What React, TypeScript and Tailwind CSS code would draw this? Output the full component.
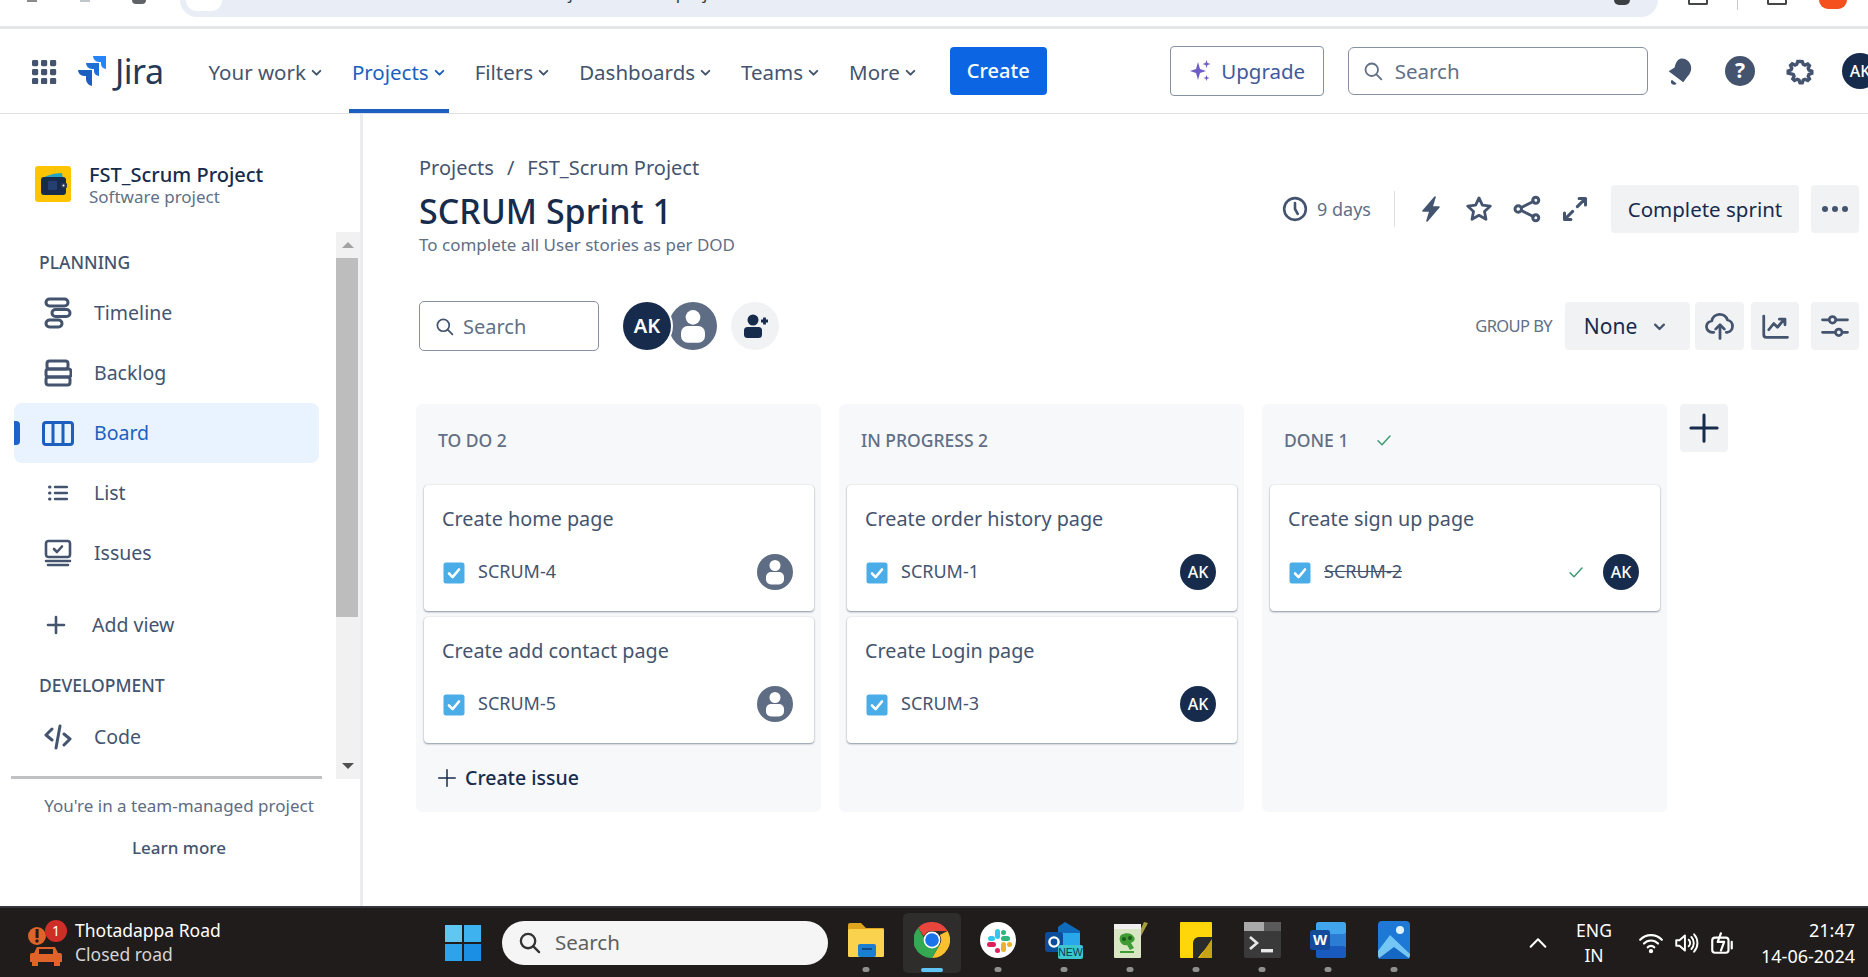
import React from "react";

const I = ({ s = 24, w = 2, c = "#44546f", className = "", children, vb = "0 0 24 24" }: any) => (
  <svg width={s} height={s} viewBox={vb} fill="none" stroke={c} strokeWidth={w} strokeLinecap="round" strokeLinejoin="round" className={className}>
    {children}
  </svg>
);
const Chevron = ({ c = "#44546f", s = 13 }: any) => (
  <I s={s} w={3.6} c={c}><path d="M5 9l7 7 7-7" /></I>
);
const SearchI = ({ s = 20, c = "#44546f", w = 2.2 }: any) => (
  <I s={s} c={c} w={w}><circle cx="10.5" cy="10.5" r="7.5" /><path d="M16 16l6 6" /></I>
);
const Check = ({ s = 16, c = "#3d9a73", w = 2.2 }: any) => (
  <I s={s} c={c} w={w}><path d="M3 13l6 6L21 6" /></I>
);
const Person = ({ s = 36 }: any) => (
  <svg width={s} height={s} viewBox="0 0 36 36">
    <circle cx="18" cy="18" r="18" fill="#5e6c84" />
    <circle cx="18" cy="11.5" r="5.5" fill="#fff" />
    <rect x="9" y="18" width="18" height="12.5" rx="5" fill="#fff" />
  </svg>
);
const AK = () => (
  <div className="w-[36px] h-[36px] rounded-full bg-[#172b4d] text-white flex items-center justify-center text-[16px] font-medium shrink-0">AK</div>
);
const CheckBox = () => (
  <svg width="22" height="22" viewBox="0 0 22 22" className="shrink-0">
    <rect x="0.5" y="0.5" width="21" height="21" rx="2.5" fill="#4bade8" />
    <path d="M6 11.5l3.6 3.6L16 7.5" stroke="#fff" strokeWidth="2.6" fill="none" strokeLinecap="round" strokeLinejoin="round" />
  </svg>
);

const navItems = [
  { t: "Your work", ml: "ml-[45px]" },
  { t: "Projects", ml: "ml-[29px]", active: true },
  { t: "Filters", ml: "ml-[29px]" },
  { t: "Dashboards", ml: "ml-[29px]" },
  { t: "Teams", ml: "ml-[29px]" },
  { t: "More", ml: "ml-[29px]" },
];

const TopBar = () => (
  <div className="h-[29px] shrink-0 bg-white border-b-[3px] border-[#e3e5e6] flex items-start overflow-hidden">
    <div className="w-[180px] shrink-0 flex items-start">
      <div className="ml-[27px] w-[10px] h-[2px] bg-[#8a8d90]" />
      <div className="ml-[43px] w-[10px] h-[2px] bg-[#c4c7c9]" />
      <div className="ml-[42px] w-[14px] h-[4px] rounded-b-full bg-[#5f6368]" />
    </div>
    <div className="w-[1478px] h-[17px] bg-[#e9eef6] rounded-b-[17px] overflow-hidden flex items-start shrink-0">
      <div className="ml-[6px] w-[36px] h-[11px] bg-white rounded-b-full" />
      <div className="ml-[239px] -mt-[18px] text-[17px] leading-[22px] text-[#3c4043] whitespace-nowrap">
        atlassian.net/jira/software/projects/SCRUM/boards/1
      </div>
      <div className="ml-auto mr-[28px] w-[16px] h-[5px] bg-[#3c4043] rounded-b-[6px]" />
    </div>
    <div className="ml-[30px] w-[20px] h-[5px] border-2 border-t-0 border-[#444746] rounded-b-[2px]" />
    <div className="ml-[29px] w-[1px] h-[10px] bg-[#c4c7c9]" />
    <div className="ml-[29px] w-[20px] h-[5px] border-2 border-t-0 border-[#444746] rounded-b-[2px]" />
    <div className="ml-[32px] w-[28px] h-[9px] rounded-b-full bg-[#f4511e]" />
  </div>
);

const JiraNav = () => (
  <div className="h-[85px] shrink-0 bg-white border-b border-[#dfe1e4] flex items-center pl-[31px] whitespace-nowrap overflow-hidden">
    <svg width="26" height="25" viewBox="0 0 26 25" fill="#44546f" className="shrink-0">
      {[1, 10, 19].map((y) => [1, 10, 19].map((x) => <rect key={x + "-" + y} x={x} y={y} width="6.2" height="6.2" rx="1.4" />))}
    </svg>
    <svg width="31" height="32" viewBox="0 0 31 32" className="ml-[19px] shrink-0">
      <path d="M30 1H17a6 6 0 006 6h2v2a5 5 0 005 5z" fill="#2684ff" />
      <path d="M23 8H10a6 6 0 006 6h2v2a5 5 0 005 5z" fill="#1f6fd6" />
      <path d="M16 15H2a6 6 0 006 6h2v3c0 3 2 6 6 7z" fill="#1c5fc0" />
    </svg>
    <span className="ml-[8px] text-[34px] leading-none text-[#253858] tracking-[-0.5px] shrink-0">Jira</span>
    {navItems.map((n) => (
      <div key={n.t} className={`${n.ml} relative h-[84px] pt-[2px] flex items-center gap-[4px] shrink-0 ${n.active ? "text-[#1d5fbf]" : "text-[#44546f]"} text-[20.5px]`}>
        <span>{n.t}</span>
        <Chevron c={n.active ? "#1d5fbf" : "#44546f"} />
        {n.active && <div className="absolute left-[-3px] right-[-3px] bottom-0 h-[4px] bg-[#1d5fbf]" />}
      </div>
    ))}
    <button className="ml-[33px] w-[97px] h-[48px] rounded-[4px] bg-[#0c66e4] text-white text-[20px] font-medium flex items-center justify-center shrink-0">Create</button>
    <button className="ml-[123px] w-[154px] h-[50px] rounded-[4px] border border-[#8590a2] bg-white flex items-center justify-center gap-[9px] text-[20.5px] text-[#3f5a9a] shrink-0">
      <svg width="24" height="24" viewBox="0 0 24 24" fill="#6e5dc6">
        <path d="M10 3l2 7 6 2-6 2-2 7-2-7-6-2 6-2z" />
        <path d="M18.5 1l1 3 3 1-3 1-1 3-1-3-3-1 3-1zM18.5 16l.8 2.2 2.2.8-2.2.8-.8 2.2-.8-2.2-2.2-.8 2.2-.8z" />
      </svg>
      Upgrade
    </button>
    <div className="ml-[24px] w-[300px] h-[48px] rounded-[6px] border border-[#8590a2] flex items-center pl-[14px] gap-[12px] text-[20.5px] text-[#626f86] shrink-0">
      <SearchI s={20} c="#626f86" />
      <span>Search</span>
    </div>
    <svg width="34" height="34" viewBox="0 0 24 24" className="ml-[15px] shrink-0" fill="#44546f">
      <path d="M13.5 3.2c3.4.2 6.3 3 6.4 6.5.1 2.5-1 4.6-2.6 6.2l-3 4-10.3-7.8 4.2-2.6C8.7 7.2 10 3 13.5 3.2z" />
      <path d="M6.4 18.4l3.2 2.4c-1 1.3-2.5 1.2-3.4.4-.8-.7-.8-2-.1-2.8z" />
    </svg>
    <svg width="32" height="32" viewBox="0 0 32 32" className="ml-[27px] shrink-0">
      <circle cx="16" cy="16" r="15" fill="#44546f" />
      <text x="16" y="23" textAnchor="middle" fontSize="21" fontWeight="700" fill="#fff" fontFamily="Noto Sans">?</text>
    </svg>
    <svg width="30" height="30" viewBox="0 0 24 24" className="ml-[29px] shrink-0" fill="none" stroke="#44546f" strokeWidth="3">
      <path d="M12 3.5l2 .1.9 2.5 1.6.7 2.4-1.1 1.5 1.5-1.1 2.4.7 1.6 2.5.9v2l-2.5.9-.7 1.6 1.1 2.4-1.5 1.5-2.4-1.1-1.6.7-.9 2.5h-2l-.9-2.5-1.6-.7-2.4 1.1-1.5-1.5 1.1-2.4-.7-1.6L1.5 14v-2l2.5-.9.7-1.6L3.6 7.1l1.5-1.5 2.4 1.1 1.6-.7.9-2.5z" transform="translate(1.2 1.2) scale(.9)" />
    </svg>
    <div className="ml-[27px] w-[36px] h-[36px] rounded-full bg-[#172b4d] text-white text-[16px] font-medium flex items-center pl-[8px] shrink-0">AK</div>
  </div>
);

const RowIcons: Record<string, React.ReactNode> = {
  Timeline: (
    <svg width="28" height="32" viewBox="0 0 28 32" fill="none" stroke="#44546f" strokeWidth="3" className="-ml-[2px]">
      <rect x="2" y="2" width="22" height="7" rx="3.5" />
      <rect x="8" y="12.5" width="18" height="7" rx="3.5" />
      <rect x="2" y="23" width="16" height="7" rx="3.5" />
    </svg>
  ),
  Backlog: (
    <svg width="28" height="28" viewBox="0 0 28 28" fill="none" stroke="#44546f" strokeWidth="3" className="-ml-[2px]">
      <rect x="3" y="2" width="21" height="8" rx="2.5" />
      <rect x="2" y="10" width="25" height="8" rx="2.5" />
      <rect x="2" y="18" width="24" height="8" rx="2.5" />
    </svg>
  ),
  Board: (
    <svg width="32" height="25" viewBox="0 0 32 25" fill="none" stroke="#1d5fbf" strokeWidth="3" className="-ml-[2px] shrink-0">
      <rect x="1.5" y="1.5" width="29" height="22" rx="2.5" />
      <path d="M11 2v21M21 2v21" />
    </svg>
  ),
  List: (
    <svg width="20" height="18" viewBox="0 0 20 18" fill="none" stroke="#44546f" strokeWidth="2.4" strokeLinecap="round" className="-ml-[2px]">
      <path d="M7 3h12M7 9h12M7 15h12" />
      <path d="M1.5 3h.5M1.5 9h.5M1.5 15h.5" strokeWidth="3" />
    </svg>
  ),
  Issues: (
    <svg width="28" height="28" viewBox="0 0 28 28" fill="none" stroke="#44546f" strokeWidth="2.6" strokeLinecap="round" strokeLinejoin="round" className="-ml-[2px]">
      <rect x="2" y="2" width="24" height="16" rx="2.5" />
      <path d="M10 10l3 3 5-5.5" />
      <path d="M2 22h24M4 26h20" />
    </svg>
  ),
  Add: (
    <svg width="20" height="20" viewBox="0 0 20 20" stroke="#44546f" strokeWidth="2.6" strokeLinecap="round" className="-ml-[5px]">
      <path d="M10 2v16M2 10h16" />
    </svg>
  ),
  Code: (
    <svg width="28" height="26" viewBox="0 0 28 26" fill="none" stroke="#44546f" strokeWidth="3" strokeLinecap="round" strokeLinejoin="round" className="-ml-[2px]">
      <path d="M8 5l-6 6 6 5M20 10l6 5-6 6M16 2l-4 22" />
    </svg>
  ),
};

const SideRow = ({ label, icon, active, shift }: any) => (
  <div className={`relative h-[60px] flex items-center text-[19.5px] ${active ? "text-[#1d5fbf]" : "text-[#44546f]"}`}>
    {active && (
      <>
        <div className="absolute left-[14px] top-0 w-[305px] h-[60px] rounded-[8px] bg-[#e9f2ff]" />
        <div className="absolute left-[14px] top-[18px] w-[6px] h-[24px] rounded-r-[4px] bg-[#1d63c9]" />
      </>
    )}
    <div className="relative w-[94px] pl-[43px] pr-[20px] flex justify-center shrink-0">{icon}</div>
    <span className={`relative ${shift ? "-ml-[2px]" : ""}`}>{label}</span>
  </div>
);

const Sidebar = () => (
  <div className="w-[363px] shrink-0 border-r-[3px] border-[#ebecee] flex flex-col bg-white">
    <div className="h-[118px] shrink-0 pl-[35px] pt-[52px] flex items-start">
      <svg width="36" height="36" viewBox="0 0 36 36" className="shrink-0">
        <rect width="36" height="36" rx="3" fill="#ffc400" />
        <path d="M8 13c0-3 12-6 19-6l1 6z" fill="#26a0c4" />
        <rect x="6" y="11" width="25" height="18" rx="3" fill="#172b4d" />
        <rect x="13" y="15" width="9" height="9" rx="1" fill="#253f70" />
        <rect x="26" y="17" width="6" height="5" rx="1" fill="#2b3a55" />
        <circle cx="28.5" cy="19.5" r="1" fill="#fff" />
      </svg>
      <div className="ml-[18px] -mt-[4px]">
        <div className="text-[20px] leading-[25px] font-medium text-[#172b4d]">FST_Scrum Project</div>
        <div className="text-[17px] leading-[20px] text-[#626f86]">Software project</div>
      </div>
    </div>
    <div className="h-[547px] shrink-0 flex overflow-hidden">
      <div className="w-[336px] shrink-0">
        <div className="h-[51px] pl-[39px] pt-[9px] flex items-center text-[17.5px] font-medium text-[#44546f]">PLANNING</div>
        <SideRow label="Timeline" icon={RowIcons.Timeline} />
        <SideRow label="Backlog" icon={RowIcons.Backlog} />
        <SideRow label="Board" icon={RowIcons.Board} active />
        <SideRow label="List" icon={RowIcons.List} />
        <SideRow label="Issues" icon={RowIcons.Issues} />
        <div className="h-[12px]" />
        <SideRow label="Add view" icon={RowIcons.Add} shift />
        <div className="h-[52px] pt-[8px] pl-[39px] flex items-center text-[17.5px] font-medium text-[#44546f]">DEVELOPMENT</div>
        <SideRow label="Code" icon={RowIcons.Code} />
      </div>
      <div className="w-[24px] bg-[#f1f1f1] flex flex-col shrink-0">
        <div className="h-[26px] flex items-center justify-center shrink-0">
          <div className="w-0 h-0 border-x-[6px] border-x-transparent border-b-[6px] border-b-[#a3a3a3]" />
        </div>
        <div className="h-[359px] w-[22px] bg-[#bdbdbd] shrink-0" />
        <div className="mt-auto h-[26px] flex items-center justify-center shrink-0">
          <div className="w-0 h-0 border-x-[6px] border-x-transparent border-t-[6px] border-t-[#505050]" />
        </div>
      </div>
    </div>
    <div className="ml-[11px] w-[311px] h-[3px] bg-[#bfc1c4] -mt-[3px] shrink-0" />
    <div className="pt-[12px] w-[358px] text-center text-[#44546f]">
      <div className="text-[17px] leading-[30px] text-[#5e6c84]">You're in a team-managed project</div>
      <div className="text-[17px] leading-[30px] mt-[12px] font-medium">Learn more</div>
    </div>
  </div>
);

const Btn = ({ className = "", children }: any) => (
  <div className={`h-[48px] rounded-[4px] bg-[#f1f2f4] flex items-center justify-center shrink-0 ${className}`}>{children}</div>
);

const Header = () => (
  <>
    <div className="text-[20px] leading-[28px] text-[#44546f] flex">
      <span>Projects</span>
      <span className="mx-[13px]">/</span>
      <span>FST_Scrum Project</span>
    </div>
    <div className="flex items-start">
      <div>
        <div className="text-[34px] leading-[48px] mt-[5px] font-medium text-[#172b4d]">SCRUM Sprint 1</div>
        <div className="text-[17px] leading-[20px] text-[#626f86]">To complete all User stories as per DOD</div>
      </div>
      <div className="ml-auto flex items-center mt-[3px] mr-[9px]">
        <I s={26} w={2.4}><circle cx="12" cy="12" r="10" /><path d="M12 6.5V12l2.5 4.5" /></I>
        <span className="ml-[9px] text-[18px] text-[#626f86]">9 days</span>
        <div className="ml-[23px] w-[1px] h-[36px] bg-[#dcdfe4]" />
        <svg width="24" height="28" viewBox="0 0 24 28" className="ml-[24px]" fill="none" stroke="#44546f" strokeWidth="3" strokeLinejoin="round">
          <path d="M16 2L4 16h7l-3 10 12-14h-7z" fill="#44546f" strokeWidth="1.6" />
        </svg>
        <I s={28} w={2.4} className="ml-[22px]"><path d="M12 2.5l2.9 6.2 6.8.8-5 4.6 1.3 6.7-6-3.4-6 3.4 1.3-6.7-5-4.6 6.8-.8z" /></I>
        <I s={30} w={2.4} className="ml-[19px]"><circle cx="5" cy="12" r="2.6" /><circle cx="19" cy="5" r="2.4" /><circle cx="19" cy="19" r="2.4" /><path d="M7.5 10.8L17 6M7.5 13.2L17 18" /></I>
        <I s={28} w={2.6} className="ml-[19px]"><path d="M14 10l7-7M15.5 3H21v5.5M10 14l-7 7M3 15.5V21h5.5" /></I>
        <Btn className="ml-[22px] w-[188px] text-[20.5px] text-[#172b4d]">Complete sprint</Btn>
        <Btn className="ml-[12px] w-[48px]">
          <svg width="28" height="8" viewBox="0 0 28 8" fill="#44546f"><circle cx="4" cy="4" r="3" /><circle cx="14" cy="4" r="3" /><circle cx="24" cy="4" r="3" /></svg>
        </Btn>
      </div>
    </div>
    <div className="mt-[46px] flex items-center h-[50px]">
      <div className="w-[180px] h-[50px] rounded-[5px] border border-[#8590a2] flex items-center pl-[15px] gap-[9px] text-[20px] text-[#626f86] shrink-0">
        <SearchI s={19} />
        <span className="pt-[2px]">Search</span>
      </div>
      <div className="ml-[24px] w-[48px] h-[48px] rounded-full bg-[#172b4d] text-white flex items-center justify-center text-[20px] font-semibold z-10 ring-2 ring-white shrink-0">AK</div>
      <div className="-ml-[2px]"><Person s={48} /></div>
      <div className="ml-[14px] w-[48px] h-[48px] rounded-full bg-[#f1f2f4] flex items-center justify-center shrink-0">
        <svg width="28" height="28" viewBox="0 0 28 28" fill="#172b4d">
          <circle cx="12" cy="8" r="5.5" />
          <rect x="3" y="15" width="18" height="11" rx="3.5" />
          <path d="M20 9h7M23.5 5.5v7" stroke="#172b4d" strokeWidth="2.8" />
        </svg>
      </div>
      <div className="ml-auto flex items-center mr-[9px]">
        <span className="text-[16.5px] text-[#626f86] tracking-[-0.6px]">GROUP BY</span>
        <Btn className="ml-[13px] w-[125px] text-[21px] text-[#172b4d] gap-[15px] pr-[4px]"><span className="pt-[2px]">None</span> <Chevron s={15} /></Btn>
        <Btn className="ml-[5px] w-[49px]">
          <I s={30} w={2.2}><path d="M7 17H6a4.5 4.5 0 01-.6-9A6.5 6.5 0 0118 7.2 5 5 0 0118 17h-1" /><path d="M12 22V11M8.5 14.5L12 11l3.5 3.5" /></I>
        </Btn>
        <Btn className="ml-[7px] w-[48px]">
          <I s={30} w={2.2}><path d="M3 4v15a2 2 0 002 2h17" /><path d="M7 15l4-5 3 3 5-6M15.5 6.5H20V11" /></I>
        </Btn>
        <Btn className="ml-[12px] w-[48px]">
          <I s={30} w={2.2}><path d="M2 7h5M13 7h9M2 17h10M18 17h4" /><circle cx="10" cy="7" r="2.6" /><circle cx="15" cy="17" r="2.6" /></I>
        </Btn>
      </div>
    </div>
  </>
);

const Card = ({ title, k, person, done }: any) => (
  <div className="h-[126px] rounded-[4px] bg-white shadow-[0_1px_2px_rgba(9,30,66,0.45),0_0_1px_rgba(9,30,66,0.2)] pl-[18px] pr-[21px] pt-[20px]">
    <div className="text-[19.8px] leading-[28px] text-[#44546f]">{title}</div>
    <div className="mt-[20px] h-[37px] flex items-center">
      <div className="pl-[1px] pt-[2px]"><CheckBox /></div>
      <span className={`ml-[13px] text-[18px] text-[#44546f] ${done ? "line-through" : ""}`}>{k}</span>
      <div className="ml-auto flex items-center gap-[19px]">
        {done && <Check />}
        {person ? <Person /> : <AK />}
      </div>
    </div>
  </div>
);

const Column = ({ title, check, cards, create }: any) => (
  <div className="w-[405px] h-[408px] rounded-[6px] bg-[#f7f8f9] pl-[8px] pr-[7px] shrink-0">
    <div className="h-[81px] pl-[14px] pb-[9px] flex items-center text-[17.5px] text-[#626f86] font-medium">
      <span>{title}</span>
      {check && <span className="ml-[28px]"><Check /></span>}
    </div>
    <div className="flex flex-col gap-[6px]">
      {cards.map((c: any) => <Card key={c.k} {...c} />)}
    </div>
    {create && (
      <div className="mt-[20px] pl-[14px] flex items-center gap-[9px] text-[19.5px] font-medium text-[#172b4d]">
        <I s={18} w={2} c="#172b4d"><path d="M12 1v22M1 12h22" /></I>
        Create issue
      </div>
    )}
  </div>
);

const Board = () => (
  <div className="mt-[53px] flex items-start gap-[18px] -ml-[3px]">
    <Column title="TO DO 2" create cards={[
      { title: "Create home page", k: "SCRUM-4", person: true },
      { title: "Create add contact page", k: "SCRUM-5", person: true },
    ]} />
    <Column title="IN PROGRESS 2" cards={[
      { title: "Create order history page", k: "SCRUM-1" },
      { title: "Create Login page", k: "SCRUM-3" },
    ]} />
    <Column title="DONE 1" check cards={[
      { title: "Create sign up page", k: "SCRUM-2", done: true },
    ]} />
    <Btn className="-ml-[5px] w-[48px]">
      <I s={30} w={2.4} c="#172b4d"><path d="M12 1.5v21M1.5 12h21" /></I>
    </Btn>
  </div>
);

const Folder = () => (
  <svg width="38" height="36" viewBox="0 0 38 36">
    <path d="M1 3a2 2 0 012-2h11l5 5h17a1 1 0 011 1v4H1z" fill="#e0a51f" />
    <rect x="1" y="7" width="36" height="28" rx="1.5" fill="#fbd24d" />
    <rect x="11" y="22" width="18" height="13" rx="2" fill="#1a7fd1" />
    <rect x="15" y="26" width="10" height="2" fill="#0b4f8a" />
  </svg>
);
const ChromeI = () => (
  <svg width="36" height="36" viewBox="0 0 36 36">
    <path d="M18 0a18 18 0 0115.6 9H18a9 9 0 00-8.2 5.3L4.2 5.7A18 18 0 0118 0z" fill="#e8453c" />
    <path d="M33.6 9A18 18 0 0118 36l7.8-13.5A9 9 0 0025.8 13z" fill="#fbc02d" />
    <path d="M18 36A18 18 0 014.2 5.7l7.8 13.5a9 9 0 0013.8 3.3z" fill="#34a853" />
    <circle cx="18" cy="18" r="8.4" fill="#fff" />
    <circle cx="18" cy="18" r="6.8" fill="#1a73e8" />
  </svg>
);
const Slack = () => (
  <svg width="36" height="36" viewBox="0 0 36 36">
    <circle cx="18" cy="18" r="18" fill="#fff" />
    <rect x="15" y="7" width="5" height="10" rx="2.5" fill="#36c5f0" />
    <rect x="8" y="14" width="7" height="5" rx="2.5" fill="#36c5f0" />
    <rect x="21" y="14" width="9" height="5" rx="2.5" fill="#2eb67d" />
    <rect x="21" y="8" width="5" height="5" rx="2.5" fill="#2eb67d" />
    <rect x="21" y="20" width="5" height="10" rx="2.5" fill="#ecb22e" />
    <rect x="27" y="20" width="5" height="5" rx="2.5" fill="#ecb22e" />
    <rect x="7" y="20" width="9" height="5" rx="2.5" fill="#e01e5a" />
    <rect x="15" y="26" width="5" height="5" rx="2.5" fill="#e01e5a" />
  </svg>
);
const Outlook = () => (
  <svg width="38" height="38" viewBox="0 0 38 38">
    <path d="M20 1l15 9v16H13V6z" fill="#0f6cbd" />
    <path d="M13 12h22v16H13z" fill="#28a8ea" />
    <rect x="0" y="11" width="18" height="20" rx="3" fill="#0a4d9a" />
    <circle cx="9" cy="21" r="4.6" fill="none" stroke="#fff" strokeWidth="2.4" />
    <rect x="13" y="24" width="25" height="14" rx="2" fill="#3dc6d0" />
    <text x="25.5" y="35" textAnchor="middle" fontSize="10.5" fill="#0b3a55" fontFamily="Liberation Sans">NEW</text>
  </svg>
);
const Notepad = () => (
  <svg width="36" height="38" viewBox="0 0 36 38">
    <path d="M32 1L26 14l3 1 7-13z" fill="#a7a03a" />
    <rect x="2" y="3" width="27" height="34" rx="1" fill="#d9e6c4" />
    <rect x="2" y="3" width="27" height="5" fill="#f0f0f0" />
    <path d="M9 14c5-3 11-2 13 2 2 3-1 5-3 6l3 5-4 2-3-5c-3 1-6-1-7-4-1-2 0-5 1-6z" fill="#3f9c35" />
    <circle cx="12" cy="18" r="2" fill="#1d5c1a" />
    <circle cx="18" cy="17" r="2" fill="#1d5c1a" />
    <path d="M8 31h14" stroke="#3f9c35" strokeWidth="2" />
  </svg>
);
const Sticky = () => (
  <svg width="32" height="36" viewBox="0 0 32 36">
    <rect width="32" height="36" rx="1" fill="#ffd60a" />
    <path d="M32 15v5L17 36h-4V21a6 6 0 016-6z" fill="#2b2b2b" />
    <path d="M32 15H20a6 6 0 00-6 6v15h4z" fill="#2b2b2b" />
    <path d="M32 17L19 36h13z" fill="#c8a216" />
  </svg>
);
const Terminal = () => (
  <svg width="37" height="36" viewBox="0 0 37 36">
    <rect width="37" height="36" rx="2" fill="#3a3a3a" />
    <rect width="37" height="9" fill="#a9a9a9" />
    <rect x="20" y="0" width="17" height="9" fill="#5a5a5a" />
    <path d="M6 15l7 6-7 6" stroke="#e8e8e8" strokeWidth="2.6" fill="none" />
    <rect x="17" y="27" width="12" height="3.4" fill="#e8e8e8" />
  </svg>
);
const Word = () => (
  <svg width="36" height="36" viewBox="0 0 36 36">
    <rect x="6" y="0" width="30" height="36" rx="3" fill="#2b7cd3" />
    <rect x="6" y="0" width="30" height="12" rx="3" fill="#41a5ee" />
    <rect x="6" y="24" width="30" height="12" rx="3" fill="#185abd" />
    <rect x="0" y="8" width="20" height="20" rx="2.5" fill="#134a9c" />
    <text x="10" y="23" textAnchor="middle" fontSize="15" fontWeight="700" fill="#fff" fontFamily="Liberation Sans">W</text>
  </svg>
);
const Photos = () => (
  <svg width="32" height="38" viewBox="0 0 32 38">
    <rect width="32" height="38" rx="4" fill="#1d78d6" />
    <path d="M0 30L12 14l20 19v1a4 4 0 01-4 4H4a4 4 0 01-4-4z" fill="#74c7f5" />
    <path d="M0 38l16-12 16 12z" fill="#1468c4" />
    <circle cx="22" cy="9" r="4" fill="#dff3ff" />
  </svg>
);

const TaskApp = ({ children, active, ml }: any) => (
  <div className={`relative ${ml} w-[58px] h-[60px] rounded-[5px] flex items-center justify-center shrink-0 pb-[5px] ${active ? "bg-[#2f2c2c]" : ""}`}>
    {children}
    <div className={`absolute bottom-[1px] left-1/2 -translate-x-1/2 rounded-full ${active ? "w-[22px] h-[4px] bg-[#60c4f5]" : "w-[7px] h-[5px] bg-[#8f8f8f]"}`} />
  </div>
);

const Taskbar = () => (
  <div className="h-[71px] shrink-0 bg-[#201c1c] border-t-2 border-[#33353a] flex items-center text-white overflow-hidden">
    <svg width="40" height="46" viewBox="0 0 40 46" className="ml-[28px] shrink-0">
      <circle cx="9" cy="16" r="9" fill="#e0632a" />
      <rect x="7.6" y="9" width="3" height="9" fill="#201c1c" />
      <circle cx="9" cy="21" r="1.7" fill="#201c1c" />
      <path d="M6 33l3-6h18l3 6h2a2 2 0 012 2v7H2v-7a2 2 0 012-2z" fill="#e0632a" />
      <rect x="4" y="42" width="6" height="4" fill="#e0632a" />
      <rect x="26" y="42" width="6" height="4" fill="#e0632a" />
      <rect x="11" y="29" width="14" height="5" fill="#201c1c" />
      <circle cx="28" cy="11" r="11" fill="#cf2d27" />
      <text x="28" y="16" textAnchor="middle" fontSize="14" fill="#fff" fontFamily="Noto Sans">1</text>
    </svg>
    <div className="ml-[7px] w-[350px] shrink-0 -mt-[2px] text-[17.5px] leading-[24px]">
      <div className="text-white">Thotadappa Road</div>
      <div className="text-[#d4d4d4]">Closed road</div>
    </div>
    <svg width="36" height="36" viewBox="0 0 36 36" className="ml-[20px] shrink-0">
      <rect x="0" y="0" width="17" height="17" fill="#5fc7f2" />
      <rect x="19" y="0" width="17" height="17" fill="#3eb2ee" />
      <rect x="0" y="19" width="17" height="17" fill="#2ea3ec" />
      <rect x="19" y="19" width="17" height="17" fill="#1a8fe3" />
    </svg>
    <div className="ml-[21px] w-[326px] h-[44px] rounded-full bg-[#f5f5f5] flex items-center pl-[16px] gap-[14px] text-[20.5px] text-[#5f5f5f] shrink-0">
      <SearchI s={23} c="#333" w={2.4} />
      <span>Search</span>
    </div>
    <TaskApp ml="ml-[9px]"><Folder /></TaskApp>
    <TaskApp ml="ml-[8px]" active><ChromeI /></TaskApp>
    <TaskApp ml="ml-[8px]"><Slack /></TaskApp>
    <TaskApp ml="ml-[8px]"><Outlook /></TaskApp>
    <TaskApp ml="ml-[8px]"><Notepad /></TaskApp>
    <TaskApp ml="ml-[8px]"><Sticky /></TaskApp>
    <TaskApp ml="ml-[8px]"><Terminal /></TaskApp>
    <TaskApp ml="ml-[8px]"><Word /></TaskApp>
    <TaskApp ml="ml-[8px]"><Photos /></TaskApp>
    <I s={22} w={2.2} c="#fff" className="ml-[104px] shrink-0"><path d="M4 16l8-8 8 8" /></I>
    <div className="ml-[20px] w-[50px] text-center text-[17.5px] leading-[25px] shrink-0">ENG<br />IN</div>
    <I s={26} w={2} c="#fff" className="ml-[19px] shrink-0">
      <path d="M2 9a14 14 0 0120 0M5.5 12.5a9 9 0 0113 0M9 16a4 4 0 016 0" /><circle cx="12" cy="19.5" r="1" fill="#fff" />
    </I>
    <I s={26} w={1.8} c="#fff" className="ml-[9px] shrink-0">
      <path d="M3 9.5v5h3l5 4.5V5L6 9.5zM14.5 9a4 4 0 010 6M17 6.5a8 8 0 010 11M19.5 4a12 12 0 010 16" />
    </I>
    <I s={26} w={2} c="#fff" className="ml-[10px] shrink-0">
      <rect x="3" y="7" width="15" height="14" rx="2.5" /><path d="M21 11v6M11 3l-3 8h6l-3 8" />
    </I>
    <div className="ml-auto mr-[13px] text-right text-[18px] leading-[26px] shrink-0">21:47<br />14-06-2024</div>
  </div>
);

export default function App() {
  return (
    <div className="w-[1868px] h-[977px] overflow-hidden flex flex-col bg-white font-['Noto_Sans',sans-serif]">
      <TopBar />
      <JiraNav />
      <div className="flex-1 flex min-h-0">
        <Sidebar />
        <div className="flex-1 pl-[56px] pt-[40px] min-w-0">
          <Header />
          <Board />
        </div>
      </div>
      <Taskbar />
    </div>
  );
}
